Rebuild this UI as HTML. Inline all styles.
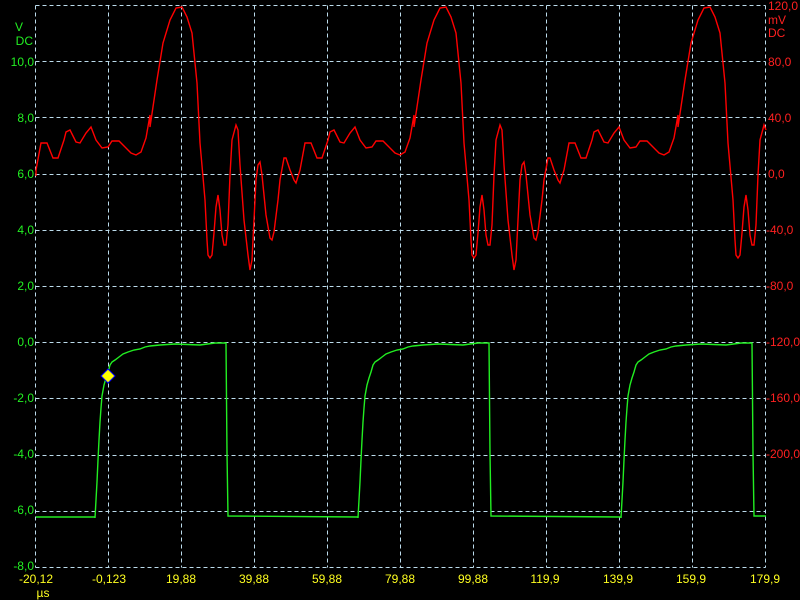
<!DOCTYPE html>
<html><head><meta charset="utf-8"><style>
html,body{margin:0;padding:0;background:#000;width:800px;height:600px;overflow:hidden}
svg{display:block}
text{font-family:"Liberation Sans",sans-serif;font-size:12px}
</style></head><body>
<svg id="s" width="800" height="600" xmlns="http://www.w3.org/2000/svg">
<rect width="800" height="600" fill="#000"/>
<g id="grid" stroke="#bcdcec" stroke-width="1" stroke-dasharray="4,3" fill="none" shape-rendering="crispEdges"></g>
<path id="red" fill="none" stroke="#ff0000" stroke-width="1.4"/>
<path id="grn" fill="none" stroke="#22ee22" stroke-width="1.4"/>
<polygon points="108,369 115,376 108,383 101,376" fill="#ffff00" stroke="#0000ff" stroke-width="1"/>
<g fill="#22ee22" text-anchor="end">
<text x="23" y="31">V</text><text x="33" y="45">DC</text>
<text x="34" y="66">10,0</text><text x="34" y="122">8,0</text><text x="34" y="178">6,0</text>
<text x="34" y="234">4,0</text><text x="34" y="290">2,0</text><text x="34" y="346">0,0</text>
<text x="34" y="402">-2,0</text><text x="34" y="458">-4,0</text><text x="34" y="514">-6,0</text>
<text x="34" y="570">-8,0</text>
</g>
<g fill="#ff2020">
<text x="768" y="10">120,0</text><text x="768" y="24">mV</text><text x="768" y="37">DC</text>
<text x="768" y="66">80,0</text><text x="768" y="122">40,0</text><text x="768" y="178">0,0</text>
<text x="766" y="234">-40,0</text><text x="766" y="290">-80,0</text><text x="766" y="346">-120,0</text>
<text x="766" y="402">-160,0</text><text x="766" y="458">-200,0</text>
</g>
<g fill="#ffff20" text-anchor="middle">
<text x="36" y="583">-20,12</text><text x="109" y="583">-0,123</text><text x="181" y="583">19,88</text>
<text x="254" y="583">39,88</text><text x="327" y="583">59,88</text><text x="400" y="583">79,88</text>
<text x="473" y="583">99,88</text><text x="545" y="583">119,9</text><text x="618" y="583">139,9</text>
<text x="691" y="583">159,9</text><text x="765" y="583">179,9</text>
<text x="43" y="597" font-size="11">µs</text>
</g>
</svg>
<script>
var g=document.getElementById('grid'),h='';
for(var i=0;i<=10;i++){var x=35.5+i*73;h+='<line x1="'+x+'" y1="5.5" x2="'+x+'" y2="567.5"/>';}
for(var j=0;j<=10;j++){var y=Math.round(5+j*56.2)+0.5;h+='<line x1="35.5" y1="'+y+'" x2="765.5" y2="'+y+'"/>';}
g.innerHTML=h;
var R=[[150,127],[157,80],[163,43],[170,20],[176,8],[182,7],[187,17],[192,33],[197,83],[200,143],[203,177],[205,200],[207,240],[208,255],[210,258],[212,255],[214,233],[216,207],[218,195],[220,210],[222,235],[224,245],[226,245],[228,225],[230,175],[232,140],[236,125],[238,130],[240,165],[244,220],[248,255],[250,270],[252,260],[254,220],[256,180],[258,165],[260,162],[262,175],[266,215],[270,238],[272,240],[274,232],[278,200],[280,180],[284,158],[286,158],[290,170],[294,180],[296,183],[300,170],[305,143],[311,143],[317,158],[322,158],[328,140],[330,132],[334,130],[340,142],[344,143],[350,133],[355,127],[360,140],[366,148],[372,147],[376,141],[383,141],[390,148],[395,153],[400,155],[405,152],[410,138],[414,115]];
var P=264,pts=[];
for(var k=-1;k<=2;k++)R.forEach(function(p){var x=p[0]+k*P;if(x>=36&&x<=766)pts.push([x,p[1]]);});
pts.sort(function(a,b){return a[0]-b[0]});
pts.unshift([36,176]);
document.getElementById('red').setAttribute('d','M'+pts.map(function(p){return p[0]+','+p[1]}).join('L'));
var G=[[95,518],[96,500],[97,482],[98,460],[99,440],[100,422],[101,408],[102,396],[104,385],[106,378],[108,372],[110,365],[112,362],[115,360],[119,357],[123,354],[128,352],[134,350],[140,349],[145,347],[150,346],[160,345],[175,344],[200,345],[215,343],[226,343],[227,453],[228,516],[358,517]];
var d='M36,517L95,517';
for(var k=0;k<3;k++){G.forEach(function(p){var x=p[0]+k*263;if(x<=766)d+='L'+x+','+p[1];});}
d+='L766,516';
document.getElementById('grn').setAttribute('d',d);
</script>
</body></html>
